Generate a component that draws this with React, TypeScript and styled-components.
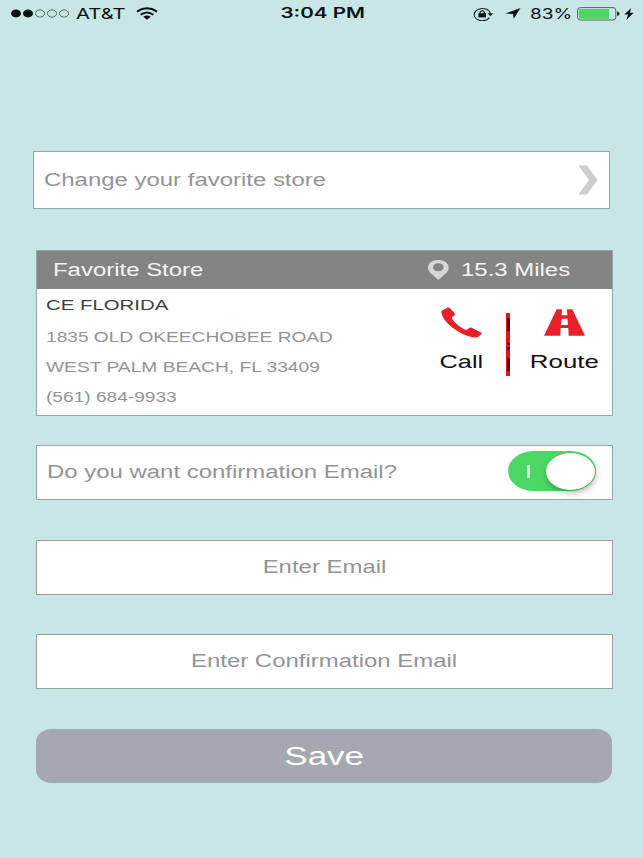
import React from "react";
import styled, { createGlobalStyle } from "styled-components";

const GlobalStyle = createGlobalStyle`
  * { box-sizing: border-box; }
  html, body { margin: 0; padding: 0; background: #c8e6e6; }
  svg { display: block; flex: none; }
`;

const Screen = styled.main`
  width: 643px;
  height: 858px;
  overflow: hidden;
  background: #c8e6e6;
  font-family: "Liberation Sans", Arial, sans-serif;
  display: flex;
  flex-direction: column;
`;

/* Wide lettering: glyphs are stretched sideways from their anchor edge. */
const Label = styled.span<{ $size: number; $wide?: number; $color?: string; $anchor?: string }>`
  display: block;
  width: max-content;
  white-space: pre;
  font-size: ${(p) => p.$size}px;
  line-height: 1.15;
  color: ${(p) => p.$color ?? "#949494"};
  transform: scaleX(${(p) => p.$wide ?? 1.33});
  transform-origin: ${(p) => p.$anchor ?? "left"} center;
`;

const StatusBar = styled.header`
  height: 27px;
  padding: 0 9px 0 11px;
  display: grid;
  grid-template-columns: 1fr auto 1fr;
  align-items: center;
  font-family: Inter, sans-serif;
`;

const StatusGroup = styled.div<{ $end?: boolean }>`
  display: flex;
  align-items: center;
  justify-content: ${(p) => (p.$end ? "flex-end" : "flex-start")};
`;

const StatusText = styled(Label)<{ $box?: number; $bold?: boolean }>`
  width: ${(p) => (p.$box ? `${p.$box}px` : "max-content")};
  font-weight: ${(p) => (p.$bold ? 600 : 400)};
`;

const Gap = styled.i<{ $w: number }>`
  width: ${(p) => p.$w}px;
  flex: none;
`;

const Card = styled.section<{ $h: number; $top: number; $left?: number; $line?: string }>`
  width: 577px;
  height: ${(p) => p.$h}px;
  margin: ${(p) => p.$top}px 0 0 ${(p) => p.$left ?? 36}px;
  flex: none;
  background: #fff;
  border: 1px solid ${(p) => p.$line ?? "#8dabae"};
`;

const RowCard = styled(Card)`
  display: flex;
  align-items: center;
  justify-content: space-between;
  padding: 0 11px 0 10px;
`;

const FieldCard = styled(Card)`
  display: flex;
  align-items: center;
  justify-content: center;
`;

const StoreHeader = styled.div`
  height: 38px;
  background: #848484;
  display: flex;
  align-items: center;
  padding: 0 42px 0 16px;
  justify-content: space-between;
`;

const Distance = styled.div`
  width: 142px;
  display: flex;
  align-items: center;
  gap: 12px;
`;

const StoreBody = styled.div`
  display: flex;
  justify-content: space-between;
  padding: 0 13px 0 9px;
`;

const Address = styled.div`
  padding-top: 7px;
  display: flex;
  flex-direction: column;
`;

const AddressLine = styled.div<{ $h: number }>`
  height: ${(p) => p.$h}px;
`;

const Actions = styled.div`
  display: flex;
  padding-top: 18px;
`;

const Action = styled.div<{ $w: number }>`
  width: ${(p) => p.$w}px;
  display: flex;
  flex-direction: column;
  align-items: center;
`;

const ActionIcon = styled.div<{ $drop?: number }>`
  height: 44px;
  padding-top: ${(p) => p.$drop ?? 0}px;
`;

const Divider = styled.div`
  margin: 6px 20px 0 23px;
`;

const Toggle = styled.div`
  width: 88px;
  height: 40px;
  margin: -3px 5px 0 0;
  padding: 1.5px;
  border-radius: 26px / 20px;
  background: #4bd763;
  display: flex;
  align-items: center;
  justify-content: space-between;
`;

const ToggleMark = styled.i`
  width: 3px;
  height: 13px;
  margin-left: 17px;
  background: #c9f3d0;
`;

const Knob = styled.i`
  width: 49px;
  height: 37px;
  border-radius: 50%;
  background: #fff;
  box-shadow: 1px 3px 6px rgba(0, 0, 0, 0.28);
`;

const SaveButton = styled.button`
  width: 576px;
  height: 54px;
  margin: 40px 0 0 36px;
  padding: 0;
  border: 0;
  border-radius: 16px / 13px;
  background: #a5a8b0;
  font-family: inherit;
  display: flex;
  align-items: center;
  justify-content: center;
`;

const SignalDots = () => (
  <svg width="59" height="9" viewBox="0 0 59 9">
    {[5, 17, 29, 41, 53].map((x, i) => (
      <ellipse key={x} cx={x} cy="4.5" rx={i < 2 ? 5 : 4.6} ry={i < 2 ? 3.9 : 3.6}
        fill={i < 2 ? "#0c1212" : "none"} stroke={i < 2 ? "none" : "#4d5c5c"} strokeWidth="0.9" />
    ))}
  </svg>
);

const Wifi = () => (
  <svg width="22" height="13" viewBox="0 0 22 13" fill="none" stroke="#0c1212" strokeWidth="2">
    <path d="M1 4.6Q11-2 21 4.6" />
    <path d="M4.6 7.8Q11 3 17.4 7.8" />
    <path d="M7.3 9.8Q11 7.4 14.7 9.8L11 12.8Z" fill="#0c1212" stroke="none" />
  </svg>
);

const RotationLock = () => (
  <svg width="21" height="14" viewBox="0 0 21 14" fill="none" stroke="#1b2525" strokeWidth="1.1">
    <path d="M16.5 10.6A8.2 6.1 0 1 1 17.4 6.4" />
    <path d="M14.4 6.2H20.4L17.4 9.2Z" fill="#1b2525" stroke="none" />
    <path d="M5.4 6.2H13V10.4H5.4Z" fill="#0c1212" stroke="none" />
    <path d="M7.1 6.4V5Q9.2 2.4 11.3 5V6.4" strokeWidth="1.3" />
  </svg>
);

const LocationArrow = () => (
  <svg width="16" height="11" viewBox="0 0 16 11">
    <path d="M15.5 0L8.7 10.8L8 6L0.5 5.5Z" fill="#0c1212" />
  </svg>
);

const Battery = () => (
  <svg width="43" height="14" viewBox="0 0 43 14">
    <rect x="0.6" y="0.6" width="38.2" height="12.4" rx="2.8" fill="none" stroke="#536463" />
    <path d="M3 1.9H32V11.7H3Q2 11.7 2 10.7V2.9Q2 1.9 3 1.9Z" fill="#4bd763" />
    <path d="M40 4.5Q42.6 4.9 42.6 6.8T40 9.1Z" fill="#263030" />
  </svg>
);

const Bolt = () => (
  <svg width="10" height="12" viewBox="0 0 10 12">
    <path d="M7.2 0L0.3 6.6H4.1L2.3 12L9.7 4.8H5.8Z" fill="#0c1212" />
  </svg>
);

const Chevron = () => (
  <svg width="20" height="30" viewBox="0 0 20 30">
    <path d="M0.5 0.5H9L19.5 15L9 29.5H0.5L11 15Z" fill="#cdcdcd" />
  </svg>
);

const Pin = () => (
  <svg width="21" height="20" viewBox="0 0 63 60">
    <path fillRule="evenodd" fill="#d6d6d6"
      d="M31 0C12 0 0 10 0 23C0 31 5 37 12 43L31 60L50 43C57 37 62 31 62 23C62 10 50 0 31 0ZM31 10C41 10 47 15 47 22S41 34 31 34S15 29 15 22S21 10 31 10Z" />
  </svg>
);

const Phone = () => (
  <svg width="41" height="31" viewBox="125 202 123 92">
    <path fill="#e8202a"
      d="M127 213L145 203Q149 202 152 205L166 220Q168 224 165 227L158 232Q157 237 164 245Q177 260 195 268Q201 271 204 269L211 264Q215 262 220 265L244 277Q248 279 246 283L237 291Q233 294 220 292Q192 289 160 264Q130 241 126 218Z" />
  </svg>
);

const Road = () => (
  <svg width="41" height="27" viewBox="431 207 123 81">
    <path fill="#e8202a" fillRule="evenodd"
      d="M469 208H485L484 226H501L500 208H516L554 287H505L504 264H481L480 287H431ZM484 236H501L503 255H482Z" />
  </svg>
);

const DividerLine = () => (
  <svg width="4" height="63" viewBox="0 0 4 63">
    <rect width="4" height="63" fill="#f20d16" />
    <path d="M2.5 5V18M2.5 30V32M2.5 34V37M2.5 45V58" stroke="#2a0508" strokeWidth="2.4" />
  </svg>
);

export default function App() {
  return (
    <Screen>
      <GlobalStyle />
      <StatusBar>
        <StatusGroup>
          <SignalDots />
          <Gap $w={6} />
          <StatusText $size={15} $wide={1.35} $color="#0c1212" $box={60}>AT&amp;T</StatusText>
          <Wifi />
        </StatusGroup>
        <StatusText $size={14.5} $wide={1.42} $color="#0c1212" $anchor="center" $bold>3:04 PM</StatusText>
        <StatusGroup $end>
          <RotationLock />
          <Gap $w={11} />
          <LocationArrow />
          <Gap $w={9} />
          <StatusText $size={15} $wide={1.27} $color="#0c1212" $box={47}>83%</StatusText>
          <Battery />
          <Gap $w={4} />
          <Bolt />
        </StatusGroup>
      </StatusBar>

      <RowCard $h={58} $top={124} $left={33}>
        <Label $size={18}>Change your favorite store</Label>
        <Chevron />
      </RowCard>

      <Card $h={166} $top={41}>
        <StoreHeader>
          <Label $size={18} $color="#f4f4f4">Favorite Store</Label>
          <Distance>
            <Pin />
            <Label $size={18} $color="#f4f4f4">15.3 Miles</Label>
          </Distance>
        </StoreHeader>
        <StoreBody>
          <Address>
            <AddressLine $h={32}><Label $size={15.5} $wide={1.315} $color="#404040">CE FLORIDA</Label></AddressLine>
            <AddressLine $h={30}><Label $size={15.3} $wide={1.25}>1835 OLD OKEECHOBEE ROAD</Label></AddressLine>
            <AddressLine $h={30}><Label $size={15.3} $wide={1.255}>WEST PALM BEACH, FL 33409</Label></AddressLine>
            <AddressLine $h={30}><Label $size={15.3} $wide={1.25}>(561) 684-9933</Label></AddressLine>
          </Address>
          <Actions>
            <Action $w={44}>
              <ActionIcon><Phone /></ActionIcon>
              <Label $size={19} $color="#111" $anchor="center">Call</Label>
            </Action>
            <Divider><DividerLine /></Divider>
            <Action $w={69}>
              <ActionIcon $drop={2}><Road /></ActionIcon>
              <Label $size={19} $wide={1.36} $color="#111" $anchor="center">Route</Label>
            </Action>
          </Actions>
        </StoreBody>
      </Card>

      <RowCard $h={55} $top={29}>
        <Label $size={18}>Do you want confirmation Email?</Label>
        <Toggle>
          <ToggleMark />
          <Knob />
        </Toggle>
      </RowCard>

      <FieldCard $h={55} $top={40} $line="#979fa3">
        <Label $size={18} $color="#939398" $anchor="center">Enter Email</Label>
      </FieldCard>

      <FieldCard $h={55} $top={39} $line="#979fa3">
        <Label $size={18} $color="#939398" $anchor="center">Enter Confirmation Email</Label>
      </FieldCard>

      <SaveButton>
        <Label $size={26.5} $wide={1.32} $color="#fff" $anchor="center">Save</Label>
      </SaveButton>
    </Screen>
  );
}
